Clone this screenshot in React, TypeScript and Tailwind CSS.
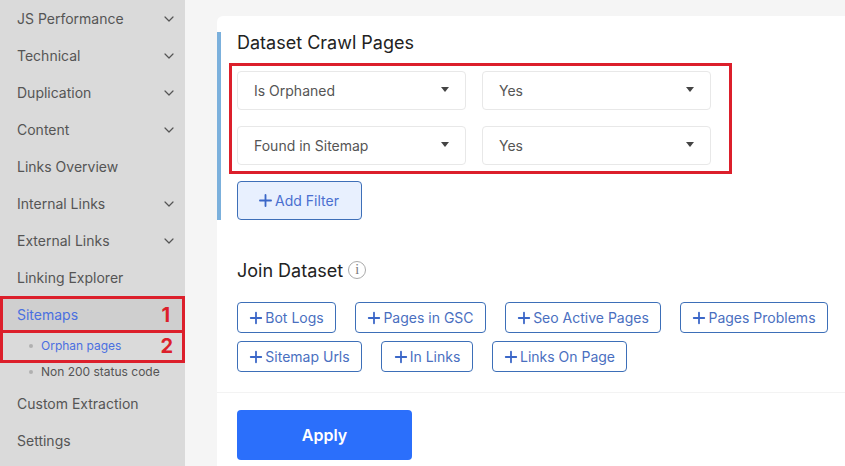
import { ChevronDown, Plus } from "lucide-react";

const navTop = [
  { label: "JS Performance", arrow: true },
  { label: "Technical", arrow: true },
  { label: "Duplication", arrow: true },
  { label: "Content", arrow: true },
  { label: "Links Overview", arrow: false },
  { label: "Internal Links", arrow: true },
  { label: "External Links", arrow: true },
  { label: "Linking Explorer", arrow: false },
];

const filters = [
  ["Is Orphaned", "Yes"],
  ["Found in Sitemap", "Yes"],
];

const joinRows = [
  [
    { label: "Bot Logs", width: "w-[99px]" },
    { label: "Pages in GSC", width: "w-[131px]" },
    { label: "Seo Active Pages", width: "w-[156px]" },
    { label: "Pages Problems", width: "w-[148px]" },
  ],
  [
    { label: "Sitemap Urls", width: "w-[125px]" },
    { label: "In Links", width: "w-[92px]" },
    { label: "Links On Page", width: "w-[135px]" },
  ],
];

function Select({ value }: { value: string }) {
  return (
    <div className="flex h-[39px] w-[229px] items-center justify-between rounded-[4px] border border-[#e8e8e8] bg-white pl-4 pr-4 text-[14px] text-[#555]">
      <span>{value}</span>
      <span className="mb-[2px] h-0 w-0 border-x-4 border-t-[5px] border-x-transparent border-t-[#444]" />
    </div>
  );
}

function NumberTag({ children }: { children: string }) {
  return <span className="text-[20px] leading-none font-bold text-[#dc1f2b]">{children}</span>;
}

export default function App() {
  return (
    <div className="relative flex h-[466px] w-[845px] overflow-hidden bg-[#f5f5f5] font-['Inter',sans-serif]">
      {/* Sidebar */}
      <aside className="w-[185px] shrink-0 bg-[#dadada] text-[14px] text-[#555]">
        {navTop.map((item) => (
          <div key={item.label} className="flex h-[37px] items-center justify-between pl-[17px] pr-2">
            <span>{item.label}</span>
            {item.arrow && <ChevronDown className="h-4 w-4" strokeWidth={1.8} />}
          </div>
        ))}
        <div className="flex h-[37px] items-center bg-[#cfcfcf] pl-[17px] text-[#4a6fe0]">Sitemaps</div>
        <div className="flex h-[25px] items-center pl-[29px] text-[12px] text-[#4a6fe0]">
          <span className="mr-2 h-1 w-1 rounded-full bg-[#b0b0b0]" />
          Orphan pages
        </div>
        <div className="flex h-[27px] items-center pl-[29px] text-[12px]">
          <span className="mr-2 h-1 w-1 rounded-full bg-[#b0b0b0]" />
          Non 200 status code
        </div>
        <div className="flex h-[37px] items-center pl-[17px]">Custom Extraction</div>
        <div className="flex h-[37px] items-center pl-[17px]">Settings</div>
      </aside>

      {/* Main panel */}
      <main className="ml-8 mt-4 flex-1 rounded-tl-[6px] bg-white">
        <div className="mt-4 border-l-4 border-[#7bb0dc] pl-4">
          <h2 className="flex h-[21px] items-center text-[18px] text-[#222]">Dataset Crawl Pages</h2>
          <div className="mt-[18px] flex flex-col gap-4">
            {filters.map((row) => (
              <div key={row[0]} className="flex gap-4">
                <Select value={row[0]} />
                <Select value={row[1]} />
              </div>
            ))}
          </div>
          <button className="mt-4 flex h-[39px] w-[125px] items-center justify-center rounded-[4px] border border-[#3d6fb8] bg-[#e8f0fe] pr-1 text-[14px] text-[#4a6fd0]">
            <Plus className="h-[19px] w-[19px] text-[#3b67c8]" strokeWidth={2.3} />
            Add Filter
          </button>
        </div>

        <div className="mt-[38px] flex h-6 items-center gap-[5px] pl-5 text-[18px] text-[#222]">
          Join Dataset
          <span className="flex h-[18px] w-[18px] items-center justify-center rounded-full border-[1.5px] border-[#aaa] font-['Liberation_Serif',serif] text-[14px] leading-none text-[#777]">
            i
          </span>
        </div>

        <div className="mt-5 flex flex-col gap-2 pl-5">
          {joinRows.map((row, i) => (
            <div key={i} className="flex gap-[19px]">
              {row.map((btn) => (
                <button
                  key={btn.label}
                  className={`flex h-[31px] items-center justify-center rounded-[4px] border border-[#3d6fb8] bg-white pr-[2px] text-[14px] text-[#4a6fbf] ${btn.width}`}
                >
                  <Plus className="h-[18px] w-[18px] text-[#3b67c8]" strokeWidth={2.4} />
                  {btn.label}
                </button>
              ))}
            </div>
          ))}
        </div>

        <div className="mt-5 h-px bg-[#f3f3f3]" />

        <div className="pl-5 pt-[17px]">
          <button className="h-[50px] w-[175px] rounded-[4px] bg-[#2b6ffb] text-[16px] font-semibold text-white">
            Apply
          </button>
        </div>
      </main>

      {/* Red annotations */}
      <div className="absolute left-0 top-[296px] flex h-[37px] w-[185px] items-center justify-end border-[3px] border-[#dc1f2b] pr-[12px]">
        <NumberTag>1</NumberTag>
      </div>
      <div className="absolute left-0 top-[330px] flex h-[33px] w-[185px] items-center justify-end border-[3px] border-[#dc1f2b] pb-[2px] pr-[9px]">
        <NumberTag>2</NumberTag>
      </div>
      <div className="absolute left-[229px] top-[63px] h-[111px] w-[503px] border-[3px] border-[#dc1f2b]" />
    </div>
  );
}
